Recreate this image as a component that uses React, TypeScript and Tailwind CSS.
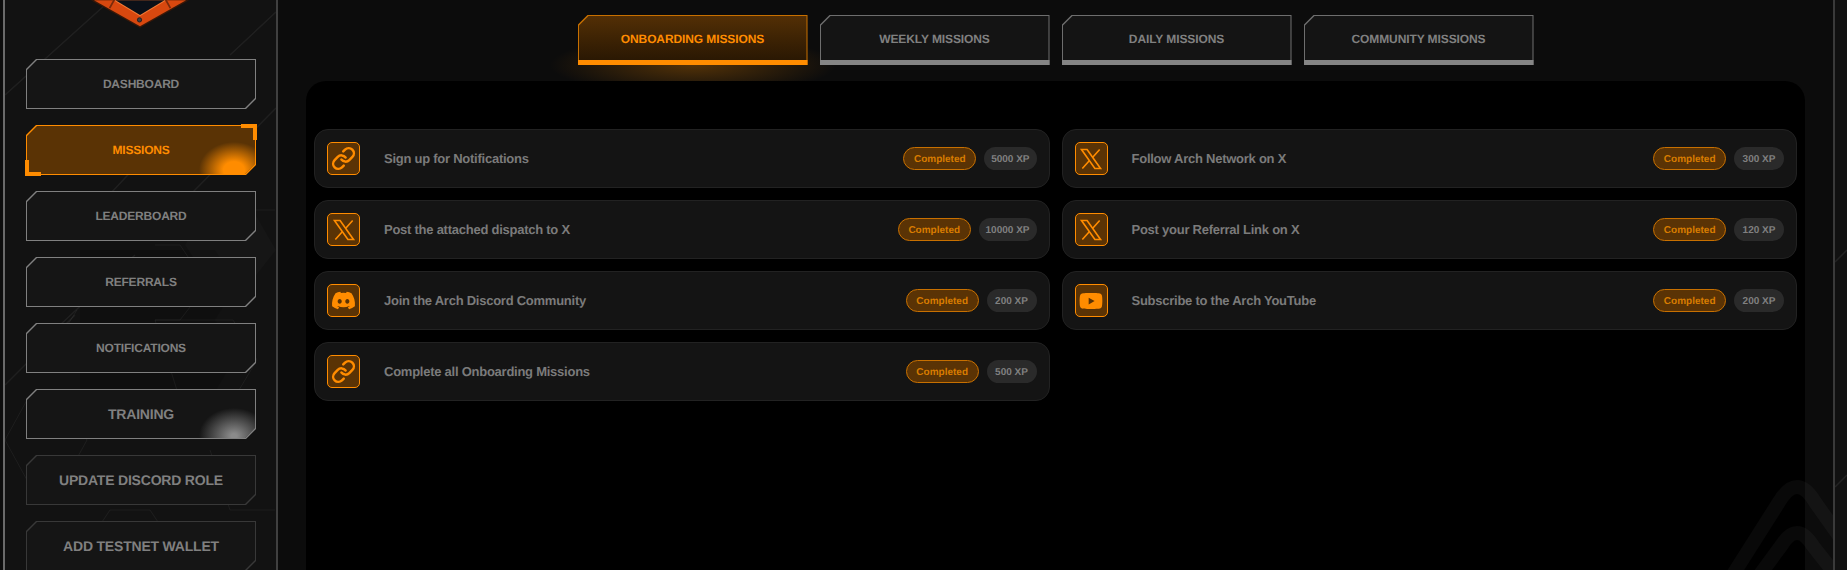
import type { ReactNode } from 'react';
import { Link } from 'lucide-react';
import { FaDiscord, FaYoutube } from 'react-icons/fa6';

const chamfer = '[clip-path:polygon(10px_0,100%_0,100%_calc(100%-10px),calc(100%-10px)_100%,0_100%,0_10px)]';

function Logo() {
  return (
    <svg viewBox="0 0 100 28" className="mx-auto block h-[28px] w-[98px] -translate-x-px">
      <polygon points="0,0 50,28 100,0" fill="#3a1808" />
      <polygon points="3,0 50,26.5 97,0" fill="#d8480f" />
      <polygon points="23,0 50,16.4 77,0" fill="#f47a35" />
      <polygon points="25,0 50,15 75,0" fill="#0b1018" />
      <path d="M24 -1 L19 8 M76 -1 L81 8" stroke="#7a2a0a" strokeWidth="1.8" />
      <circle cx="49.5" cy="20" r="2.2" fill="#3a3f46" stroke="#15181c" strokeWidth="0.8" />
    </svg>
  );
}

function XLogo() {
  return (
    <svg viewBox="0 0 24 24" width="26" height="26" fill="none" stroke="currentColor" strokeWidth="1.5" strokeLinejoin="miter">
      <path d="M3.2 3.2h5.2L20.8 20.8h-5.2z" />
      <path d="M20 3.2 L13.4 10.6 M10.4 13.6 L4 20.8" />
    </svg>
  );
}

function SideBackdrop() {
  return (
    <svg className="pointer-events-none absolute inset-0 h-full w-full" viewBox="0 0 271 570" preserveAspectRatio="none">
      <path d="M205 205 L245 205 L271 250 L245 283 L205 283 L180 245 Z" fill="#ffffff" fillOpacity="0.02" />
      <path d="M75 250 L210 250 L232 285 L210 320 L75 320 Z M75 320 L210 320 L232 355 L210 392 L75 392 Z" fill="#000000" fillOpacity="0.12" />
      <g fill="none" stroke="#ffffff" strokeOpacity="0.05" strokeWidth="1">
        <path d="M150 245 L175 245 L202 285 L175 320 L150 320 M150 320 L175 320 L228 320 L252 360 L228 400 L175 400 Z" />
        <path d="M0 440 L22 400 L60 400 L82 440 L60 480 L22 480 Z M85 540 L105 510 L145 510 L165 540 M205 450 L225 510 L270 510" />
        <path d="M72 310 L50 345 M215 210 L270 210" />
      </g>
      <g stroke="#ffffff" strokeOpacity="0.06" strokeWidth="1.5">
        <path d="M0 95 L100 5 M225 55 L271 12 M90 210 L165 130 M185 195 L271 108 M55 325 L130 255 M0 385 L70 315" />
      </g>
    </svg>
  );
}

function NavButton({ label, variant = 'idle', large }: { label: string; variant?: 'idle' | 'active' | 'glow' | 'dim'; large?: boolean }) {
  const edge = variant === 'active' ? 'bg-[#ff8c00]' : variant === 'dim' ? 'bg-[#383838]' : 'bg-[#808080]';
  const fill = variant === 'active' ? 'bg-[#5a3305]' : 'bg-[#151515]';
  const text = variant === 'active' ? 'text-[#ff8c00]' : 'text-[#808080]';
  return (
    <div className="relative h-[50px] w-[230px] shrink-0">
      <div className={`h-full w-full p-px ${edge} ${chamfer}`}>
        <div className={`relative flex h-full w-full items-center justify-center overflow-hidden ${fill} ${chamfer}`}>
          {variant === 'active' && (
            <div className="absolute -right-[14px] -bottom-[24px] h-[56px] w-[70px] bg-[radial-gradient(closest-side,#ff8c00_30%,rgba(255,140,0,0)_100%)]" />
          )}
          {variant === 'glow' && (
            <div className="absolute -right-[14px] -bottom-[26px] h-[56px] w-[70px] bg-[radial-gradient(closest-side,#8a8a8a_8%,rgba(138,138,138,0)_100%)]" />
          )}
          <span className={`relative font-bold tracking-[-0.2px] ${large ? 'text-[14px]' : 'text-[12px]'} ${text}`}>{label}</span>
        </div>
      </div>
      {variant === 'active' && (
        <>
          <span className="absolute -top-px -right-px h-[16px] w-[16px] border-t-4 border-r-4 border-[#ff8c00]" />
          <span className="absolute -bottom-px -left-px h-[16px] w-[16px] border-b-4 border-l-4 border-[#ff8c00]" />
        </>
      )}
    </div>
  );
}

function Tab({ label, active }: { label: string; active?: boolean }) {
  return (
    <div className="relative h-[50px] w-[230px]">
      {active && (
        <div className="absolute -inset-x-[28px] top-[20px] -bottom-[30px] bg-[radial-gradient(closest-side,rgba(130,75,5,0.6),rgba(130,75,5,0))]" />
      )}
      <div className={`relative h-full w-full px-px pt-px pb-[5px] [clip-path:polygon(10px_0,100%_0,100%_100%,0_100%,0_10px)] ${active ? 'bg-[#c87000]' : 'bg-[#6e6e6e]'}`}>
        <div className={`flex h-full w-full items-center justify-center pt-[2px] [clip-path:polygon(10px_0,100%_0,100%_100%,0_100%,0_10px)] ${active ? 'bg-gradient-to-b from-[#532f05] to-[#2a1803]' : 'bg-[#141414]'}`}>
          <span className={`text-[12px] font-bold tracking-[-0.1px] ${active ? 'text-[#ff8c00]' : 'text-[#808080]'}`}>{label}</span>
        </div>
        <div className={`absolute inset-x-0 bottom-0 h-[5px] ${active ? 'bg-[#ff8c00]' : 'bg-[#858585]'}`} />
      </div>
    </div>
  );
}

function MissionRow({ icon, title, xp }: { icon: ReactNode; title: string; xp: string }) {
  return (
    <div className="flex h-[59px] items-center rounded-[14px] border border-[#222222] bg-[#141414] px-[12px]">
      <div className="flex h-[33px] w-[33px] shrink-0 items-center justify-center rounded-[5px] border border-[#ff8c00] bg-[#5a3305] text-[#ff8c00]">
        {icon}
      </div>
      <span className="ml-[24px] text-[13px] font-bold tracking-[-0.25px] text-[#7b7b7b]">{title}</span>
      <div className="ml-auto flex items-center gap-[8px]">
        <span className="flex h-[23px] items-center rounded-full border border-[#c87000] bg-[#5a3305] px-[9.5px] pt-px text-[10px] font-bold text-[#d87c00]">
          Completed
        </span>
        <span className="flex h-[23px] min-w-[50px] items-center justify-center rounded-full bg-[#2a2a2a] px-[7px] pt-px text-[10px] font-bold text-[#808080]">{xp}</span>
      </div>
    </div>
  );
}

const linkIcon = <Link size={25} strokeWidth={2.4} />;
const xIcon = <XLogo />;
const discordIcon = <FaDiscord size={25} />;
const youtubeIcon = <FaYoutube size={24} />;

export default function App() {
  return (
    <div className="flex h-[570px] w-full overflow-hidden bg-[#0b0b0b] font-['Liberation_Sans',Arial,sans-serif] [text-rendering:geometricPrecision]">
      <div className="w-[3px] shrink-0 bg-[#0d0d0d]" />

      {/* Sidebar */}
      <aside className="relative flex w-[275px] shrink-0 flex-col items-start border-x-2 border-l-[#6a6a6a] border-r-[#404040] bg-[#121212] pl-[21px]">
        <SideBackdrop />
        <div className="relative w-[230px]">
          <Logo />
        </div>
        <div className="relative mt-[31px] flex flex-col gap-[16px]">
          <NavButton label="DASHBOARD" />
          <NavButton label="MISSIONS" variant="active" />
          <NavButton label="LEADERBOARD" />
          <NavButton label="REFERRALS" />
          <NavButton label="NOTIFICATIONS" />
          <NavButton label="TRAINING" variant="glow" large />
          <NavButton label="UPDATE DISCORD ROLE" variant="dim" large />
          <NavButton label="ADD TESTNET WALLET" variant="dim" large />
        </div>
      </aside>

      {/* Main */}
      <main className="relative flex min-w-0 flex-1 flex-col overflow-hidden bg-[#0c0c0c] px-[28px] pt-[15px]">
        <div className="flex justify-center gap-[12px]">
          <Tab label="ONBOARDING MISSIONS" active />
          <Tab label="WEEKLY MISSIONS" />
          <Tab label="DAILY MISSIONS" />
          <Tab label="COMMUNITY MISSIONS" />
        </div>
        <section className="relative mt-[16px] flex-1 rounded-t-[20px] bg-black px-[8px] pt-[48px]">
          <div className="grid grid-cols-2 items-start gap-[12px]">
            <div className="flex flex-col gap-[12px]">
              <MissionRow icon={linkIcon} title="Sign up for Notifications" xp="5000 XP" />
              <MissionRow icon={xIcon} title="Post the attached dispatch to X" xp="10000 XP" />
              <MissionRow icon={discordIcon} title="Join the Arch Discord Community" xp="200 XP" />
              <MissionRow icon={linkIcon} title="Complete all Onboarding Missions" xp="500 XP" />
            </div>
            <div className="flex flex-col gap-[12px]">
              <MissionRow icon={xIcon} title="Follow Arch Network on X" xp="300 XP" />
              <MissionRow icon={xIcon} title="Post your Referral Link on X" xp="120 XP" />
              <MissionRow icon={youtubeIcon} title="Subscribe to the Arch YouTube" xp="200 XP" />
            </div>
          </div>
        </section>
        {/* faint arch mark */}
        <svg className="pointer-events-none absolute right-0 bottom-0 h-[100px] w-[130px]" viewBox="0 0 130 100">
          <g fill="none" stroke="#ffffff" strokeOpacity="0.035" strokeWidth="14" strokeLinejoin="round">
            <path d="M24 114 L76 32 Q94 2 112 32 L170 114" />
            <path d="M50 114 L78 76 Q94 50 110 76 L140 114" />
          </g>
        </svg>
      </main>

      {/* Right edge */}
      <div className="relative w-[14px] shrink-0 overflow-hidden border-l-2 border-[#3a3a3a] bg-[#111111]">
        <svg className="absolute inset-0 h-full w-full" viewBox="0 0 12 570">
          <path d="M0 262 L12 250 M0 487 L12 475" stroke="#ffffff" strokeOpacity="0.08" strokeWidth="1.5" />
        </svg>
      </div>
    </div>
  );
}
